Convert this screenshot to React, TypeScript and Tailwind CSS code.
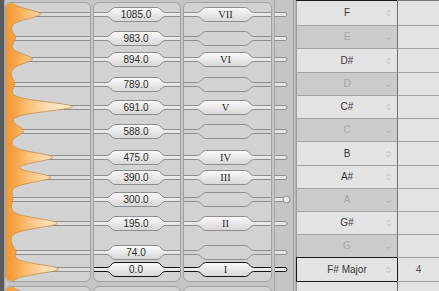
import React from "react";

const K = 0.235;
const yOf = (c: number) => Math.round(269 - c * K);

type Step = { c: number; roman?: string; amp: number };

const STEPS: Step[] = [
  { c: 1085, roman: "VII", amp: 30 },
  { c: 983, amp: 5 },
  { c: 894, roman: "VI", amp: 22 },
  { c: 789, amp: 4 },
  { c: 691, roman: "V", amp: 62 },
  { c: 588, amp: 13 },
  { c: 475, roman: "IV", amp: 42 },
  { c: 390, roman: "III", amp: 40 },
  { c: 300, amp: 2 },
  { c: 195, roman: "II", amp: 47 },
  { c: 74, amp: 5 },
  { c: 0, roman: "I", amp: 48 },
];

const FONT = "Liberation Sans, Arial, sans-serif";

function spectrumPath() {
  const peaks = STEPS.map((s) => ({ y: 269 - s.c * K, a: s.amp }));
  peaks.push({ y: 269 - 1200 * K, a: 48 });
  peaks.push({ y: 269 + 115 * K, a: 30 });
  let d = "M0,0";
  for (let y = 0; y <= 290; y += 0.5) {
    let x = 5;
    for (const p of peaks) {
      const g = (y - p.y) / 6.6;
      const u = (y - p.y) / 5;
      x += p.a * (0.85 * Math.exp(-g * g) + 0.15 / (1 + u * u));
    }
    d += ` L${x.toFixed(2)},${y}`;
  }
  return d + " L0,290 Z";
}

function pillD(cx: number, cy: number, hw: number, t: number, x0: number, x1: number) {
  const tt = cy - 1.5,
    tb = cy + 2.5,
    pt = cy - 6.5,
    pb = cy + 7.5;
  const a = cx - hw - t,
    b = cx - hw,
    c = cx + hw,
    d = cx + hw + t;
  const k = t * 0.5;
  const top = `M${x0},${tt} L${a},${tt} C${a + k},${tt} ${b - k},${pt} ${b},${pt} L${c},${pt} C${c + k},${pt} ${d - k},${tt} ${d},${tt} L${x1},${tt}`;
  const bottom = `M${x0},${tb} L${a},${tb} C${a + k},${tb} ${b - k},${pb} ${b},${pb} L${c},${pb} C${c + k},${pb} ${d - k},${tb} ${d},${tb} L${x1},${tb}`;
  const fill = `${top} L${x1},${tb} L${d},${tb} C${d - k},${tb} ${c + k},${pb} ${c},${pb} L${b},${pb} C${b - k},${pb} ${a + k},${tb} ${a},${tb} L${x0},${tb} Z`;
  return { top, bottom, fill };
}

function Pill(props: {
  cx: number;
  cy: number;
  hw: number;
  x1: number;
  label?: string;
  filled: boolean;
  selected: boolean;
  grad: string;
  serif?: boolean;
}) {
  const { cx, cy, hw, x1, label, filled, selected, grad, serif } = props;
  const { top, bottom, fill } = pillD(cx, cy, hw, 8, 0, x1);
  const stroke = selected ? "#141414" : "#8e8e8e";
  return (
    <g>
      <path d={fill} fill={filled ? `url(#${grad})` : "#d3d3d3"} />
      <path d={top} fill="none" stroke={stroke} strokeWidth={1} />
      <path d={bottom} fill="none" stroke={stroke} strokeWidth={1} />
      {label ? (
        <text
          x={cx}
          y={cy + 4}
          textAnchor="middle"
          fontSize={serif ? 10.5 : 10}
          fontFamily={serif ? "Liberation Serif, serif" : FONT}
          fill="#2c2c2c"
        >
          {label}
        </text>
      ) : null}
    </g>
  );
}

function Panel({ w, children }: { w: string; children: React.ReactNode }) {
  return (
    <div className={`relative my-[2px] shrink-0 overflow-hidden rounded-[6px] border border-[#a2a2a2] bg-[#d2d2d2] ${w}`}>
      {children}
    </div>
  );
}

function Octave({ id, labels }: { id: string; labels: boolean }) {
  const spec = spectrumPath();
  return (
    <div className="flex h-[284px] shrink-0">
      <Panel w="w-[86px]">
        <svg className="absolute left-[-1px] top-[-1px]" width={86} height={280} viewBox="0 2 86 280">
          <defs>
            <linearGradient id={`or${id}`} gradientUnits="userSpaceOnUse" x1="0" y1="0" x2="80" y2="0">
              <stop offset="0" stopColor="#f29630" />
              <stop offset="0.12" stopColor="#f6a444" />
              <stop offset="0.3" stopColor="#fbc27c" />
              <stop offset="0.55" stopColor="#fde0b8" />
              <stop offset="1" stopColor="#fff4e6" />
            </linearGradient>
          </defs>
          {STEPS.map((s) => {
            const cy = yOf(s.c);
            return (
              <g key={s.c}>
                <rect x={0} y={cy - 1.5} width={86} height={4} fill="#dcdcdc" />
                <line x1={0} x2={86} y1={cy - 1.5} y2={cy - 1.5} stroke="#8f8f8f" />
                <line x1={0} x2={86} y1={cy + 2.5} y2={cy + 2.5} stroke="#8f8f8f" />
              </g>
            );
          })}
          <path d={spec} fill={`url(#or${id})`} stroke="#c88a48" strokeWidth={0.8} />
        </svg>
      </Panel>
      <div className="w-[2px] shrink-0" />
      <Panel w="w-[88px]">
        <svg className="absolute left-[-1px] top-[-1px]" width={88} height={280} viewBox="0 2 88 280">
          <defs>
            <linearGradient id={`pg${id}`} x1="0" y1="0" x2="0" y2="1">
              <stop offset="0" stopColor="#fbfbfb" />
              <stop offset="1" stopColor="#d6d6d6" />
            </linearGradient>
          </defs>
          {STEPS.map((s) => (
            <Pill
              key={s.c}
              cx={43}
              cy={yOf(s.c)}
              hw={21}
              x1={88}
              label={labels ? s.c.toFixed(1) : undefined}
              filled
              selected={s.c === 0}
              grad={`pg${id}`}
            />
          ))}
        </svg>
      </Panel>
      <div className="w-[2px] shrink-0" />
      <Panel w="w-[89px]">
        <svg className="absolute left-[-1px] top-[-1px]" width={89} height={280} viewBox="0 2 89 280">
          <defs>
            <linearGradient id={`rg${id}`} x1="0" y1="0" x2="0" y2="1">
              <stop offset="0" stopColor="#fbfbfb" />
              <stop offset="1" stopColor="#d6d6d6" />
            </linearGradient>
          </defs>
          {STEPS.map((s) => (
            <Pill
              key={s.c}
              cx={42.5}
              cy={yOf(s.c)}
              hw={20}
              x1={89}
              label={labels ? s.roman : undefined}
              filled={!!s.roman}
              selected={s.c === 0}
              grad={`rg${id}`}
              serif
            />
          ))}
        </svg>
      </Panel>
      <div className="relative h-full w-[24px] shrink-0">
        <svg className="absolute left-0 top-0" width={24} height={284} viewBox="0 0 24 284">
          <line x1={2.5} x2={2.5} y1={0} y2={284} stroke="#a9a9a9" />
          <line x1={21.5} x2={21.5} y1={0} y2={284} stroke="#9d9d9d" />
          <line x1={23.5} x2={23.5} y1={0} y2={284} stroke="#b4b4b4" />
          {STEPS.map((s) => {
            const cy = yOf(s.c);
            const tt = cy - 1.5;
            const tb = cy + 2.5;
            const sel = s.c === 0;
            const stroke = sel ? "#141414" : "#8e8e8e";
            return (
              <g key={s.c}>
                <path
                  d={`M3,${tt} L13,${tt} A2,2 0 0 1 13,${tb} L3,${tb}`}
                  fill="#e6e6e6"
                  stroke={stroke}
                />
                {s.c === 300 ? (
                  <circle cx={14.5} cy={cy + 0.5} r={3.5} fill="#e6e6e6" stroke="#8e8e8e" />
                ) : null}
              </g>
            );
          })}
        </svg>
      </div>
    </div>
  );
}

const UpDown = () => (
  <svg width="5" height="8" viewBox="0 0 5 8" className="shrink-0">
    <path d="M0.5 3.2 L2.5 1.2 L4.5 3.2 M0.5 4.8 L2.5 6.8 L4.5 4.8" fill="none" stroke="#b6b6b6" strokeWidth="1" />
  </svg>
);

const Down = () => (
  <svg width="5" height="8" viewBox="0 0 5 8" className="shrink-0">
    <path d="M0.8 4.8 L2.5 6.4 L4.2 4.8" fill="none" stroke="#a9a9a9" strokeWidth="1" />
  </svg>
);

type Row = { n: string; on: boolean; h: string; sel?: boolean; nb?: boolean; num?: string };

const ROWS: Row[] = [
  { n: "F", on: true, h: "h-[25px]" },
  { n: "E", on: false, h: "h-[23px]" },
  { n: "D#", on: true, h: "h-[24px]" },
  { n: "D", on: false, h: "h-[23px]" },
  { n: "C#", on: true, h: "h-[23px]" },
  { n: "C", on: false, h: "h-[23px]" },
  { n: "B", on: true, h: "h-[24px]" },
  { n: "A#", on: true, h: "h-[23px]" },
  { n: "A", on: false, h: "h-[23px]" },
  { n: "G#", on: true, h: "h-[23px]" },
  { n: "G", on: false, h: "h-[22px]", nb: true },
  { n: "F# Major", on: true, h: "h-[25px]", sel: true, num: "4" },
  { n: "", on: true, h: "h-[30px]", nb: true },
];

function NoteRow({ r }: { r: Row }) {
  const cell5 = r.sel
    ? "border-y border-l border-[#181818]"
    : r.nb
    ? "border-l border-l-[#9c9c9c]"
    : "border-b border-l border-b-[#a4a4a4] border-l-[#9c9c9c]";
  const cell6 = r.sel
    ? "border-y border-l border-y-[#a4a4a4] border-l-[#181818]"
    : r.nb
    ? "border-l border-l-[#6e6e6e]"
    : "border-b border-l border-b-[#a4a4a4] border-l-[#6e6e6e]";
  return (
    <div className={`flex shrink-0 ${r.h}`}>
      <div
        className={`flex w-[101px] items-center pl-[11px] pr-[6px] ${cell5} ${
          r.on ? "bg-[#e3e3e3] text-[#3a3a3a]" : "bg-[#cbcbcb] text-[#a6a6a6]"
        }`}
      >
        <span className="flex-1 text-center text-[10px] leading-none">{r.n}</span>
        {r.n === "" ? null : r.on ? <UpDown /> : <Down />}
      </div>
      <div className={`flex w-[42px] items-center justify-center bg-[#e3e3e3] text-[10px] leading-none text-[#585858] ${cell6}`}>
        {r.num ?? ""}
      </div>
    </div>
  );
}

export default function App() {
  return (
    <div className="flex h-[291px] w-[439px] overflow-hidden bg-[#c5c5c5] font-['Liberation_Sans',Arial,sans-serif]">
      <div className="h-full w-[4px] shrink-0 bg-[#5b5b5b]" />
      <div className="h-full w-px shrink-0 bg-[#a6a6a6]" />
      <div className="flex shrink-0 flex-col">
        <Octave id="a" labels />
        <Octave id="b" labels={false} />
      </div>
      <div className="flex w-[143px] shrink-0 flex-col">
        <div className="flex h-px shrink-0">
          <div className="w-[101px] bg-[#181818]" />
          <div className="w-[42px] bg-[#7a7a7a]" />
        </div>
        {ROWS.map((r, i) => (
          <NoteRow key={i} r={r} />
        ))}
      </div>
    </div>
  );
}
